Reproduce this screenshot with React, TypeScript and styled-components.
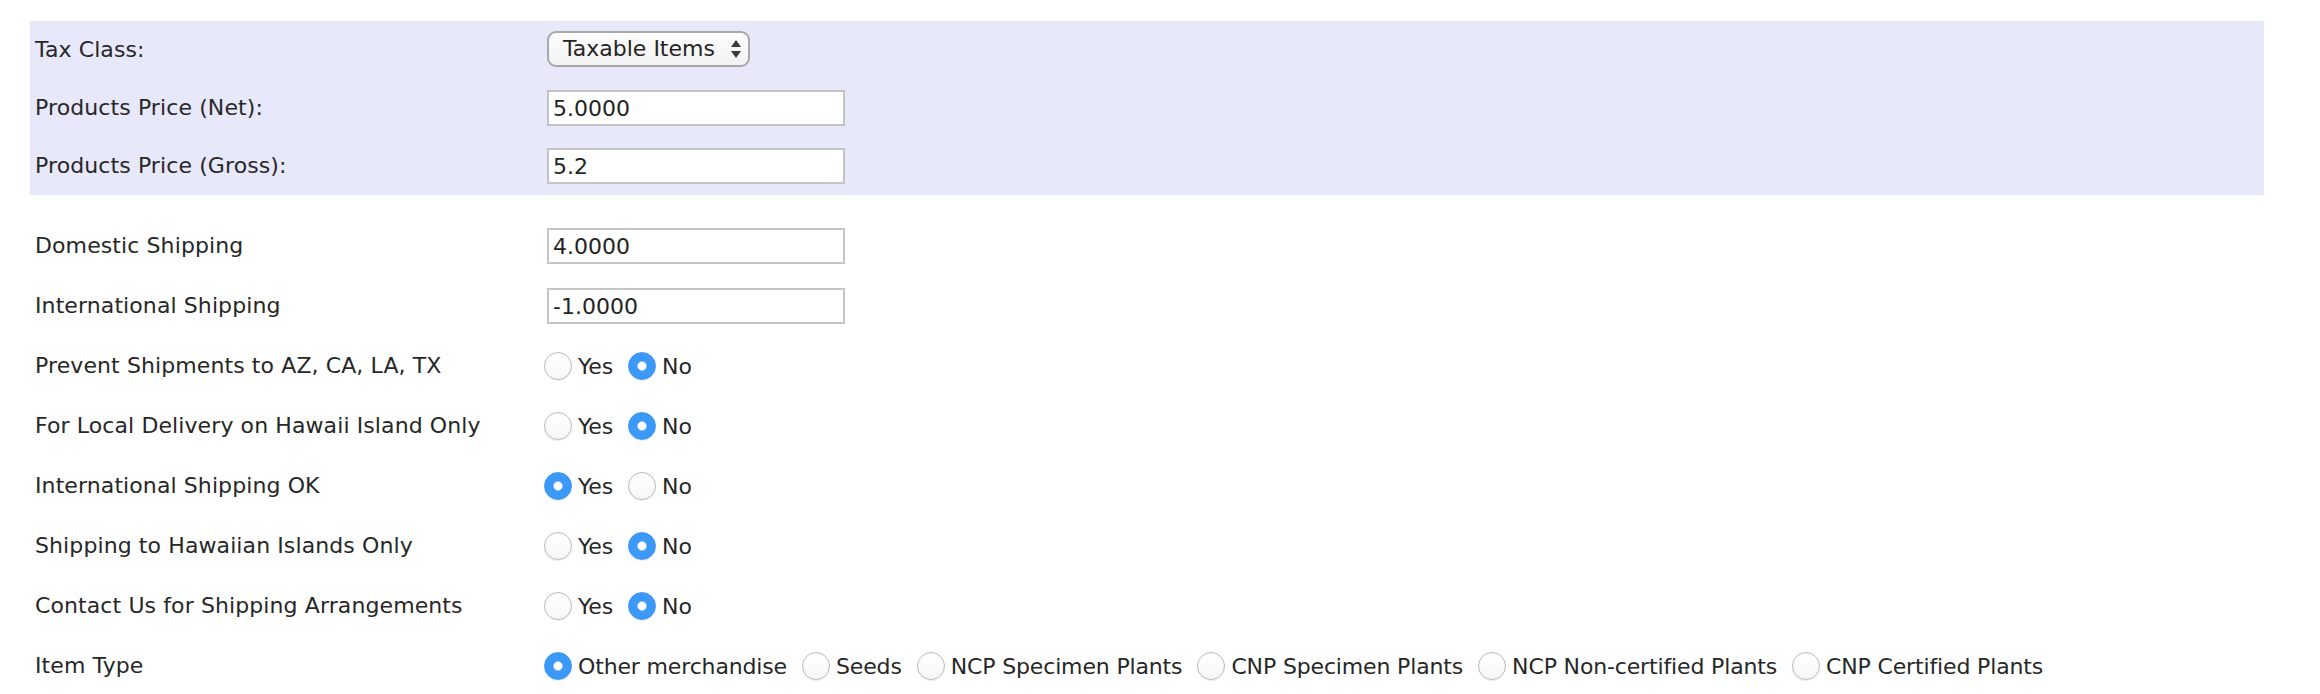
import React from "react";
import styled, { createGlobalStyle } from "styled-components";

const Global = createGlobalStyle`
  html, body { margin: 0; padding: 0; background: #ffffff; }
  body {
    font-family: "DejaVu Sans", Verdana, sans-serif;
    font-size: 22px;
    color: #272727;
  }
  * { box-sizing: border-box; }
`;

const Page = styled.div`
  padding: 21px 0 0 30px;
`;

const Form = styled.div`
  width: 2234px;
  display: flex;
  flex-direction: column;
`;

const Band = styled.div`
  background: #e8e8fb;
  display: flex;
  flex-direction: column;
`;

const Plain = styled.div`
  margin-top: 21px;
  display: flex;
  flex-direction: column;
`;

const Row = styled.div<{ $h: number }>`
  display: grid;
  grid-template-columns: 517px 1fr;
  align-items: center;
  height: ${(p) => p.$h}px;
`;

const Label = styled.div`
  padding-left: 5px;
  white-space: nowrap;
  line-height: 1;
  letter-spacing: 0.1px;
`;

const Cell = styled.div`
  display: flex;
  align-items: center;
`;

const SelectBox = styled.div`
  width: 203px;
  height: 36px;
  border: 2px solid #a8a8a8;
  border-radius: 9px;
  background: linear-gradient(#fdfdfd, #f2f2f2);
  display: flex;
  align-items: center;
  justify-content: space-between;
  padding: 0 6px 0 14px;
  color: #242424;
  white-space: nowrap;
  margin-top: -3px;
`;

const TextInput = styled.input`
  width: 298px;
  height: 36px;
  border: 2px solid #c4c4c4;
  background: #ffffff;
  padding: 0 4px;
  font: inherit;
  color: #242424;
  outline: none;
`;

const Group = styled.div`
  display: flex;
  align-items: center;
  gap: 15px;
  margin-left: -3px;
`;

const Option = styled.label`
  display: inline-flex;
  align-items: center;
  gap: 6px;
  white-space: nowrap;
  letter-spacing: -0.15px;
`;

const Radio = styled.input.attrs({ type: "radio" })`
  appearance: none;
  -webkit-appearance: none;
  margin: 0;
  width: 28px;
  height: 28px;
  border-radius: 50%;
  border: 1.5px solid #b9b9b9;
  background: linear-gradient(#ffffff, #f7f7f7);
  box-shadow: 0 1px 1px rgba(0, 0, 0, 0.08);
  &:checked {
    border-color: #3b97f6;
    background: radial-gradient(circle, #ffffff 0 4px, #3d99f9 5px);
  }
`;

function Arrows() {
  return (
    <svg width="12" height="20" viewBox="0 0 12 20">
      <path d="M6 1 L11 8 L1 8 Z" fill="#3a3a3a" />
      <path d="M6 19 L11 12 L1 12 Z" fill="#3a3a3a" />
    </svg>
  );
}

type RadioRow = { label: string; name: string; options: string[]; checked: number };

const radioRows: RadioRow[] = [
  { label: "Prevent Shipments to AZ, CA, LA, TX", name: "prevent", options: ["Yes", "No"], checked: 1 },
  { label: "For Local Delivery on Hawaii Island Only", name: "local", options: ["Yes", "No"], checked: 1 },
  { label: "International Shipping OK", name: "intl", options: ["Yes", "No"], checked: 0 },
  { label: "Shipping to Hawaiian Islands Only", name: "hawaii", options: ["Yes", "No"], checked: 1 },
  { label: "Contact Us for Shipping Arrangements", name: "contact", options: ["Yes", "No"], checked: 1 },
  {
    label: "Item Type",
    name: "itemtype",
    options: [
      "Other merchandise",
      "Seeds",
      "NCP Specimen Plants",
      "CNP Specimen Plants",
      "NCP Non-certified Plants",
      "CNP Certified Plants",
    ],
    checked: 0,
  },
];

export default function App() {
  return (
    <Page>
      <Global />
      <Form>
        <Band>
          <Row $h={58}>
            <Label>Tax Class:</Label>
            <Cell>
              <SelectBox>
                <span>Taxable Items</span>
                <Arrows />
              </SelectBox>
            </Cell>
          </Row>
          <Row $h={58}>
            <Label>Products Price (Net):</Label>
            <Cell>
              <TextInput defaultValue="5.0000" />
            </Cell>
          </Row>
          <Row $h={58}>
            <Label>Products Price (Gross):</Label>
            <Cell>
              <TextInput defaultValue="5.2" />
            </Cell>
          </Row>
        </Band>
        <Plain>
          <Row $h={60}>
            <Label>Domestic Shipping</Label>
            <Cell>
              <TextInput defaultValue="4.0000" />
            </Cell>
          </Row>
          <Row $h={60}>
            <Label>International Shipping</Label>
            <Cell>
              <TextInput defaultValue="-1.0000" />
            </Cell>
          </Row>
          {radioRows.map((r) => (
            <Row $h={60} key={r.name}>
              <Label>{r.label}</Label>
              <Cell>
                <Group>
                  {r.options.map((o, i) => (
                    <Option key={o}>
                      <Radio name={r.name} defaultChecked={i === r.checked} />
                      {o}
                    </Option>
                  ))}
                </Group>
              </Cell>
            </Row>
          ))}
        </Plain>
      </Form>
    </Page>
  );
}
